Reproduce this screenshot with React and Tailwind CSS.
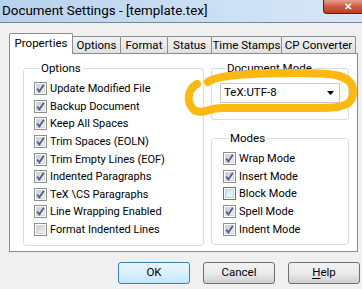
import React from "react";

const font = { fontFamily: 'Roboto, "Noto Sans", sans-serif' };

function Check({ checked, hot }) {
  return (
    <span
      className={
        "w-[13px] h-[13px] shrink-0 border p-px flex " +
        (hot ? "border-[#3c7fb1]" : "border-[#8e8f8f]")
      }
    >
      <span
        className={
          "flex-1 flex items-center justify-center border " +
          (hot
            ? "border-[#a9d8f3] bg-gradient-to-br from-[#c4e4f8] to-[#eef8fe]"
            : "border-[#d6d6d6] bg-gradient-to-br from-[#cbcbcb] to-[#f4f4f4]")
        }
      >
        {checked && (
          <svg width="9" height="9" viewBox="0 0 9 9" className="-m-px">
            <path d="M1.2 4.6 L3.4 7.4 L7.8 0.8" fill="none" stroke="#4a5f98" strokeWidth="1.8" />
          </svg>
        )}
      </span>
    </span>
  );
}

function Row({ label, checked, hot }) {
  return (
    <div className="h-[17.6px] flex items-center gap-[3px]">
      <Check checked={checked} hot={hot} />
      <span className="text-[11px] leading-none text-black whitespace-nowrap">{label}</span>
    </div>
  );
}

function Tab({ label, w, active }) {
  if (active) {
    return (
      <div
        className={`${w} h-[21px] -mb-px relative z-10 bg-white border border-b-0 border-[#898c95] rounded-t-[2px] flex items-start justify-center pt-[4px] text-[11.5px] leading-none text-black whitespace-nowrap`}
      >
        {label}
      </div>
    );
  }
  return (
    <div
      className={`${w} h-[17px] -ml-px border border-b-0 border-[#898c95] rounded-t-[2px] bg-gradient-to-b from-[#f2f2f2] to-[#e0e0e0] flex items-center justify-center pt-px text-[11.5px] text-black leading-none whitespace-nowrap`}
    >
      {label}
    </div>
  );
}

function Group({ label, className, children }) {
  return (
    <fieldset className={`border border-[#d5dfe5] rounded-[3px] ${className}`}>
      <legend className="ml-[5px] px-[2px] text-[11.5px] leading-[16px] text-black">{label}</legend>
      {children}
    </fieldset>
  );
}

function Button({ children, primary }) {
  return (
    <button
      className={
        "w-[72px] h-[22px] rounded-[3px] border text-[11.5px] text-black flex items-center justify-center " +
        (primary
          ? "border-[#3c7fb1] bg-gradient-to-b from-[#eaf6fd] via-[#d9f0fc] to-[#bee6fd]"
          : "border-[#707070] bg-gradient-to-b from-[#f2f2f2] via-[#ebebeb] to-[#cfcfcf]")
      }
    >
      {children}
    </button>
  );
}

export default function App() {
  return (
    <div className="w-[362px] h-[289px] bg-[#f0f0f0] overflow-hidden relative flex flex-col" style={font}>
      <div className="h-[23px] shrink-0 flex justify-between border-b border-[#7a8591] bg-gradient-to-r from-[#b7d1ec] via-[#c9def3] to-[#d6e6f6]">
        <span className="pl-[2px] pt-[1px] text-[13.4px] leading-[20px] text-black whitespace-nowrap">Document Settings - [template.tex]</span>
        <div className="w-[39px] h-[14px] rounded-bl-[4px] border border-t-0 border-r-0 border-[#5a1e12] bg-gradient-to-b from-[#e6a08f] via-[#cc5a41] to-[#c23b20] flex items-center justify-end pr-[10px]">
          <span className="text-white text-[10px] leading-none font-bold">✕</span>
        </div>
      </div>

      <div className="mt-[10px] pl-[9px] flex items-end h-[20px]">
        <Tab label="Properties" w="w-[64px]" active />
        <Tab label="Options" w="w-[49px]" />
        <Tab label="Format" w="w-[48px]" />
        <Tab label="Status" w="w-[45px]" />
        <Tab label="Time Stamps" w="w-[71px]" />
        <Tab label="CP Converter" w="w-[75px]" />
      </div>

      <div className="ml-[9px] w-[349px] h-[199px] bg-white border border-[#898c95] flex gap-[7px] pl-[13px] pt-[6px]">
        <Group label="Options" className="w-[181px] h-[186px] pl-[10px] pt-[4px]">
          <Row label="Update Modified File" checked />
          <Row label="Backup Document" checked />
          <Row label="Keep All Spaces" checked />
          <Row label="Trim Spaces (EOLN)" checked />
          <Row label="Trim Empty Lines (EOF)" checked />
          <Row label="Indented Paragraphs" checked />
          <Row label="TeX \CS Paragraphs" checked />
          <Row label="Line Wrapping Enabled" checked />
          <Row label="Format Indented Lines" />
        </Group>

        <div className="flex flex-col gap-[10px]">
          <Group label="Document Mode" className="w-[138px] h-[60px] pl-[8px] pt-[7px]">
            <div className="w-[120px] h-[20px] border border-[#c9c9c9] bg-white flex items-center justify-between pl-[3px] pr-[5px] text-[11.5px] text-black">
              <span>TeX:UTF-8</span>
              <svg width="7" height="4" viewBox="0 0 7 4">
                <path d="M0 0 H7 L3.5 4 Z" fill="#000" />
              </svg>
            </div>
          </Group>
          <Group label="Modes" className="w-[138px] h-[115px] pl-[11px] pt-[4px]">
            <Row label="Wrap Mode" checked />
            <Row label="Insert Mode" checked />
            <Row label="Block Mode" hot />
            <Row label="Spell Mode" checked />
            <Row label="Indent Mode" checked />
          </Group>
        </div>
      </div>

      <div className="mt-[10px] pl-[118px] flex gap-[13px]">
        <Button primary>OK</Button>
        <Button>Cancel</Button>
        <Button>
          <span className="underline underline-offset-2">H</span>elp
        </Button>
      </div>

      <svg className="absolute inset-0 pointer-events-none" width="362" height="289" viewBox="0 0 362 289">
        <path
          d="M208 82 C216 75 250 73 300 73 C330 73 352 74 353 90 C354 104 345 108 320 108 L222 108 C208 108 202 115 194 110 C186 102 187 90 197 84"
          fill="none"
          stroke="#fdb912"
          strokeWidth="8"
          strokeLinecap="round"
          strokeLinejoin="round"
        />
      </svg>
    </div>
  );
}
